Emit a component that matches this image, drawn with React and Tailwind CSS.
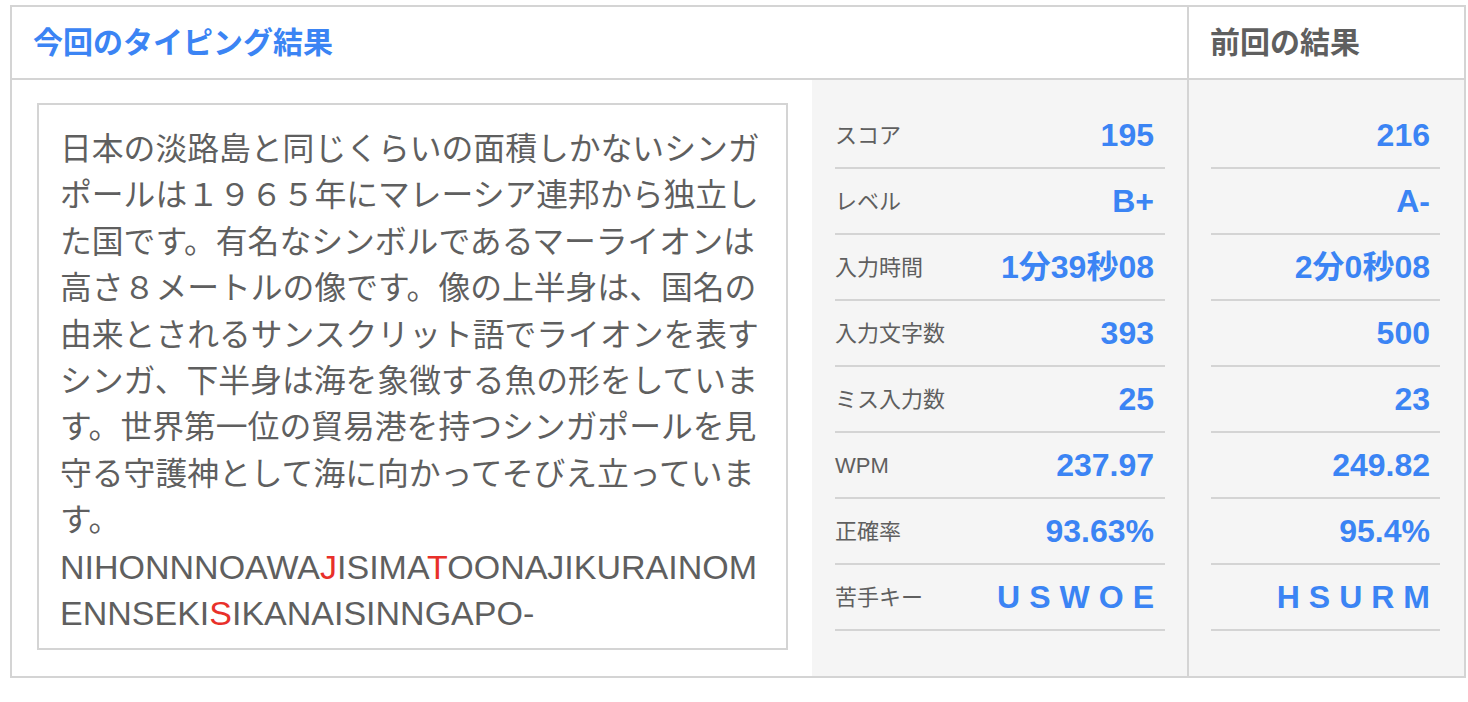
const font = { fontFamily: '"Liberation Sans", "Noto Sans CJK JP", sans-serif' };

const jpLines = [
  '日本の淡路島と同じくらいの面積しかないシンガ',
  'ポールは１９６５年にマレーシア連邦から独立し',
  'た国です。有名なシンボルであるマーライオンは',
  '高さ８メートルの像です。像の上半身は、国名の',
  '由来とされるサンスクリット語でライオンを表す',
  'シンガ、下半身は海を象徴する魚の形をしていま',
  'す。世界第一位の貿易港を持つシンガポールを見',
  '守る守護神として海に向かってそびえ立っていま',
  'す。',
];

const current = [
  ['スコア', '195'],
  ['レベル', 'B+'],
  ['入力時間', '1分39秒08'],
  ['入力文字数', '393'],
  ['ミス入力数', '25'],
  ['WPM', '237.97'],
  ['正確率', '93.63%'],
  ['苦手キー', 'USWOE'],
];

const previous = ['216', 'A-', '2分0秒08', '500', '23', '249.82', '95.4%', 'HSURM'];

function Value({ v, keys }) {
  if (keys) {
    return <span className="text-[32px] font-bold text-[#3b84f4] tracking-[9px] -mr-[9px]">{v}</span>;
  }
  return <span className="text-[32px] font-bold text-[#3b84f4]">{v}</span>;
}

export default function App() {
  return (
    <div className="bg-white w-[1468px] h-[702px] pt-[5px] pl-[10px]" style={font}>
      <div className="w-[1456px] border-2 border-[#d4d4d4] grid grid-cols-[1177px_1fr]">
        <div className="h-[73px] flex items-center pl-[21px] border-b-2 border-r-2 border-[#d4d4d4]">
          <h1 className="text-[30px] font-bold text-[#3b84f4]">今回のタイピング結果</h1>
        </div>
        <div className="h-[73px] flex items-center pl-[21px] border-b-2 border-[#d4d4d4]">
          <h2 className="text-[30px] font-bold text-[#5f5f5f]">前回の結果</h2>
        </div>

        <div className="flex border-r-2 border-[#d4d4d4]">
          <div className="w-[800px] pl-[25px] pt-[23px] pb-[24px]">
            <div className="w-[751px] border-2 border-[#d4d4d4] pl-[21px] pt-[21px] pb-[12px] text-[#5f5f5f] text-[31.8px] leading-[46.4px] whitespace-nowrap">
              {jpLines.map((l, i) => (
                <div key={i}>{l}</div>
              ))}
              <div className="text-[34px]">
                NIHONNNOAWA<span className="text-[#e8302a]">J</span>ISIMA<span className="text-[#e8302a]">T</span>OONAJIKURAINOM
              </div>
              <div className="text-[34px]">
                ENNSEKI<span className="text-[#e8302a]">S</span>IKANAISINNGAPO-
              </div>
            </div>
          </div>
          <div className="flex-1 bg-[#f5f5f5] pl-[23px] pr-[22px] pt-[23px]">
            {current.map(([label, v], i) => (
              <div key={i} className="h-[66px] flex items-center justify-between pr-[11px] border-b-2 border-[#d4d4d4]">
                <span className="text-[22px] text-[#5f5f5f]">{label}</span>
                <Value v={v} keys={i === 7} />
              </div>
            ))}
          </div>
        </div>
        <div className="bg-[#f5f5f5] pl-[22px] pr-[24px] pt-[23px] pb-[45px]">
          {previous.map((v, i) => (
            <div key={i} className="h-[66px] flex items-center justify-end pr-[10px] border-b-2 border-[#d4d4d4]">
              <Value v={v} keys={i === 7} />
            </div>
          ))}
        </div>
      </div>
    </div>
  );
}
